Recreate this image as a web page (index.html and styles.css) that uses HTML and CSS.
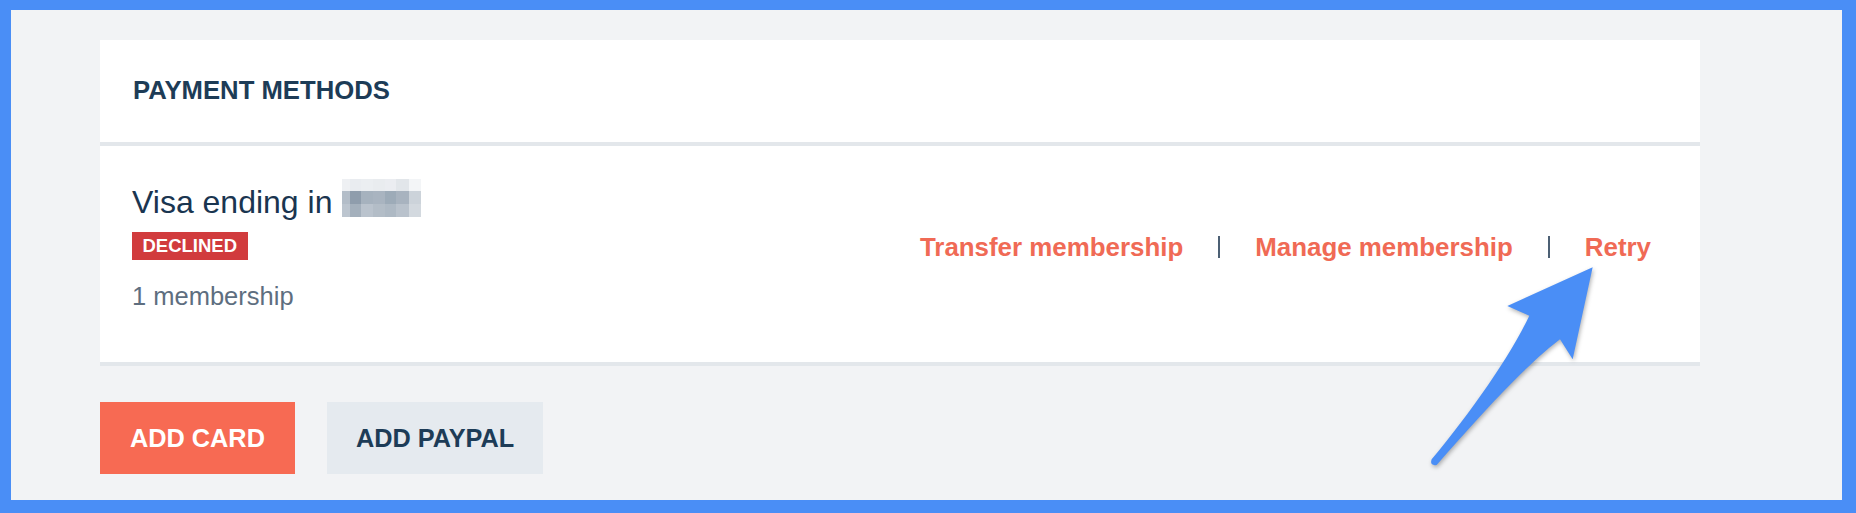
FILE: index.html
```html
<!DOCTYPE html>
<html lang="en">
<head>
<meta charset="utf-8">
<title>Payment methods</title>
<link rel="stylesheet" href="styles.css">
</head>
<body>
<div class="frame">
  <section class="card">
    <header class="card-header">PAYMENT METHODS</header>
    <div class="method">
      <div class="method-info">
        <div class="method-title">
          <span>Visa ending in</span>
          <span class="mosaic" aria-label="hidden digits">
            <i></i><i></i><i></i><i></i><i></i><i></i><i></i>
            <i></i><i></i><i></i><i></i><i></i><i></i><i></i>
            <i></i><i></i><i></i><i></i><i></i><i></i><i></i>
          </span>
        </div>
        <div class="badge">DECLINED</div>
        <div class="method-meta">1 membership</div>
      </div>
      <nav class="method-actions">
        <a class="action" href="#">Transfer membership</a>
        <span class="sep"></span>
        <a class="action" href="#">Manage membership</a>
        <span class="sep"></span>
        <a class="action" href="#">Retry</a>
      </nav>
    </div>
  </section>
  <div class="buttons">
    <button class="btn btn-primary">ADD CARD</button>
    <button class="btn btn-secondary">ADD PAYPAL</button>
  </div>
  <svg class="arrow" viewBox="0 0 660 720" width="220" height="240" aria-hidden="true">
    <path d="M578 52 L322 168 L388 197 C330 320 210 490 95 628 Q88 648 110 645 C220 520 360 360 480 268 L518 328 Z" fill="#4a8ef6"/>
  </svg>
</div>
</body>
</html>
```

FILE: styles.css
```css
* { box-sizing: border-box; }

html, body {
  margin: 0;
  padding: 0;
}

body {
  background: #4a8ef6;
  font-family: "Liberation Sans", Arial, sans-serif;
  width: 1856px;
  height: 513px;
  overflow: hidden;
}

.frame {
  position: relative;
  margin: 10px 14px 0 11px;
  height: 490px;
  background: #f2f3f5;
  padding: 30px 0 0 89px;
}

.card {
  width: 1600px;
  background: #ffffff;
}

.card-header {
  height: 106px;
  display: flex;
  align-items: center;
  padding: 0 0 0 33px;
  border-bottom: 4px solid #e3e7eb;
  font-size: 25.7px;
  font-weight: 700;
  color: #1d3c57;
  line-height: 1;
}

.method {
  display: flex;
  align-items: center;
  justify-content: space-between;
  padding: 36px 49px 50px 32px;
  border-bottom: 4px solid #e3e7eb;
}

.method-info {
  display: flex;
  flex-direction: column;
  align-items: flex-start;
}

.method-title {
  display: flex;
  align-items: flex-start;
  font-size: 32px;
  line-height: 40px;
  color: #1a3550;
}

.mosaic {
  display: grid;
  grid-template-columns: 8px 11px 12px 12px 11px 13px 12px;
  grid-template-rows: 12px 13px 13px;
  margin: -3px 0 0 10px;
}

.mosaic i:nth-child(1) { background: #eef0f3; }
.mosaic i:nth-child(2) { background: #e9ecf0; }
.mosaic i:nth-child(3) { background: #ebeef1; }
.mosaic i:nth-child(4) { background: #e9ecef; }
.mosaic i:nth-child(5) { background: #ebedf1; }
.mosaic i:nth-child(6) { background: #e2e6ea; }
.mosaic i:nth-child(7) { background: #f3f5f7; }
.mosaic i:nth-child(8) { background: #b3bdc8; }
.mosaic i:nth-child(9) { background: #8f9dac; }
.mosaic i:nth-child(10) { background: #a6b2be; }
.mosaic i:nth-child(11) { background: #a9b4c0; }
.mosaic i:nth-child(12) { background: #9dabb8; }
.mosaic i:nth-child(13) { background: #a8b3bf; }
.mosaic i:nth-child(14) { background: #ccd3da; }
.mosaic i:nth-child(15) { background: #bcc5cf; }
.mosaic i:nth-child(16) { background: #a4b0bc; }
.mosaic i:nth-child(17) { background: #bac3cd; }
.mosaic i:nth-child(18) { background: #b3bdc7; }
.mosaic i:nth-child(19) { background: #aeb9c4; }
.mosaic i:nth-child(20) { background: #b9c2cc; }
.mosaic i:nth-child(21) { background: #d3d9df; }

.badge {
  margin-top: 10px;
  height: 28px;
  padding: 0 10.5px;
  background: #d13b3d;
  color: #ffffff;
  font-size: 18.5px;
  font-weight: 700;
  line-height: 28px;
}

.method-meta {
  margin-top: 20px;
  font-size: 25.5px;
  line-height: 32px;
  color: #5e6e7f;
}

.method-actions {
  display: flex;
  align-items: center;
  gap: 35px;
}

.action {
  font-size: 25.9px;
  line-height: 32px;
  font-weight: 700;
  color: #f06a55;
  text-decoration: none;
}

.sep {
  width: 2px;
  height: 22px;
  background: #4c6074;
}

.buttons {
  display: flex;
  gap: 32px;
  margin-top: 36px;
}

.btn {
  height: 72px;
  border: 0;
  border-radius: 0;
  font-family: "Liberation Sans", Arial, sans-serif;
  font-size: 25.3px;
  font-weight: 700;
  line-height: 72px;
  cursor: pointer;
}

.btn-primary {
  padding: 0 30px;
  background: #f76a53;
  color: #ffffff;
}

.btn-secondary {
  padding: 0 29px;
  background: #e5eaef;
  color: #1d3c57;
}

.arrow {
  position: absolute;
  left: 1389px;
  top: 240px;
  filter: drop-shadow(1px 2px 2px rgba(0, 0, 0, 0.3));
}
```
